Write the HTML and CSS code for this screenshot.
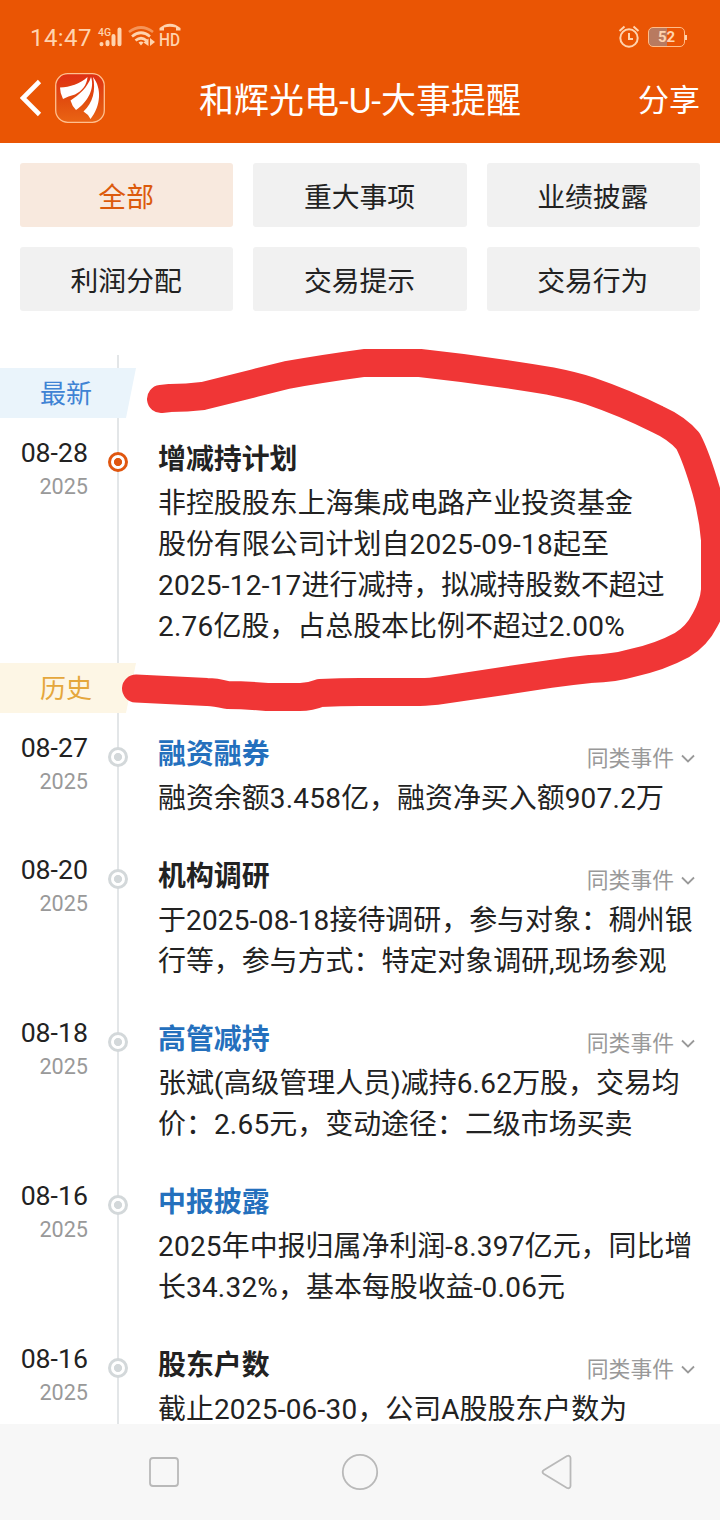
FILE: index.html
```html
<!DOCTYPE html>
<html lang="zh-CN">
<head>
    <meta charset="UTF-8">
    <meta name="viewport" content="width=device-width, initial-scale=1.0">
    <title>和辉光电-U-大事提醒</title>
    <link rel="stylesheet" href="styles.css">
</head>
<body>
    <div class="screen">
        <header class="header">
            <div class="status">
                <span class="clock">14:47</span>
                <svg class="signals" width="86" height="28" viewBox="0 0 86 28" fill="none">
                    <text x="1" y="11" class="net">4G</text>
                    <g stroke="#ffd3ae" stroke-width="4" stroke-linecap="round">
                        <path d="M4.500 19v.3M10.500 17v2.300M16.500 11v8.300M22.500 4.500v14.800"/>
                    </g>
                    <g stroke="#ffd3ae" stroke-width="2.700">
                        <path d="M32 7Q44-2 56 7" opacity=".5"/>
                        <path d="M35 11.500Q44 4 53 11.500"/>
                        <path d="M38.500 15.500Q44 11 49.500 15.500"/>
                    </g>
                    <path d="M41.500 17.500q2.500-2 5 0l-2.500 3zM51.500 13.500v7.500l-5-3.500zM53 13v8l5-4z" fill="#ffd3ae"/>
                    <path d="M62.500 5.500V3Q73-5.500 83.500 3v2.500h-4.500V2.500q-6-1.600-12 0v3z" fill="#ffd3ae"/>
                    <text x="62" y="21" class="hd" textLength="21" lengthAdjust="spacingAndGlyphs">HD</text>
                </svg>
                <svg class="alarm" width="22" height="24" viewBox="0 0 22 24" fill="none" stroke="#ffd3ae" stroke-width="2">
                    <circle cx="11" cy="13" r="8.700"/>
                    <path d="M11 8v6h4M1.500 6l5-4.500M20.500 6l-5-4.500"/>
                </svg>
                <div class="battery"><span>52</span></div>
            </div>
            <div class="titlebar">
                <svg class="back" width="24" height="38" viewBox="0 0 24 38" fill="none" stroke="#fff" stroke-width="4.600">
                    <path d="M19.500 2.500L3 19l16.500 16.500"/>
                </svg>
                <svg class="logo" width="50" height="50" viewBox="0 0 50 50">
                    <defs>
                        <linearGradient id="logobg" x1="0" y1="0" x2="0" y2="1">
                            <stop offset="0" stop-color="#df2f13"/>
                            <stop offset=".6" stop-color="#e2500f"/>
                            <stop offset="1" stop-color="#ea6414"/>
                        </linearGradient>
                    </defs>
                    <rect x=".7" y=".7" width="48.600" height="48.600" rx="12" fill="url(#logobg)" stroke="#ffc08f" stroke-width="1.300"/>
                    <g fill="#fff">
                        <path d="M5 14.500C15 14 25 11 32.500 4C32 12 27 18 20 21.500Q13 23 8 26Q5 20 5 14.500z"/>
                        <path d="M15.500 27.500C24 22 33 14 36 4C40 15 33 29 21 37Q17 33 15.500 27.500z"/>
                        <path d="M38 4C47 15 46 33 35.500 46Q33 41 28.500 38.500C38 30 41 17 38 4z"/>
                    </g>
                </svg>
                <h1>和辉光电-U-大事提醒</h1>
                <span class="share">分享</span>
            </div>
        </header>

        <nav class="tabs">
            <span class="tab active">全部</span>
            <span class="tab">重大事项</span>
            <span class="tab">业绩披露</span>
            <span class="tab">利润分配</span>
            <span class="tab">交易提示</span>
            <span class="tab">交易行为</span>
        </nav>

        <main class="timeline">
            <div class="tag latest">最新</div>
            <section class="event current">
                <div class="date">08-28<small>2025</small></div>
                <i class="dot"></i>
                <div class="content">
                    <div class="row"><h2>增减持计划</h2></div>
                    <p>非控股股东上海集成电路产业投资基金<br>股份有限公司计划自<b>2025-09-18</b>起至<br><b>2025-12-17</b>进行减持，拟减持股数不超过<br><b>2.76</b>亿股，占总股本比例不超过<b>2.00%</b></p>
                </div>
            </section>

            <div class="tag history">历史</div>
            <section class="event">
                <div class="date">08-27<small>2025</small></div>
                <i class="dot"></i>
                <div class="content">
                    <div class="row"><h2 class="link">融资融券</h2><span class="more">同类事件<svg width="14" height="9" viewBox="0 0 14 9"><path d="M1 1.500l6 6 6-6"/></svg></span></div>
                    <p>融资余额<b>3.458</b>亿，融资净买入额<b>907.2</b>万</p>
                </div>
            </section>
            <section class="event">
                <div class="date">08-20<small>2025</small></div>
                <i class="dot"></i>
                <div class="content">
                    <div class="row"><h2>机构调研</h2><span class="more">同类事件<svg width="14" height="9" viewBox="0 0 14 9"><path d="M1 1.500l6 6 6-6"/></svg></span></div>
                    <p>于<b>2025-08-18</b>接待调研，参与对象：稠州银<br>行等，参与方式：特定对象调研,现场参观</p>
                </div>
            </section>
            <section class="event">
                <div class="date">08-18<small>2025</small></div>
                <i class="dot"></i>
                <div class="content">
                    <div class="row"><h2 class="link">高管减持</h2><span class="more">同类事件<svg width="14" height="9" viewBox="0 0 14 9"><path d="M1 1.500l6 6 6-6"/></svg></span></div>
                    <p>张斌(高级管理人员)减持<b>6.62</b>万股，交易均<br>价：<b>2.65</b>元，变动途径：二级市场买卖</p>
                </div>
            </section>
            <section class="event">
                <div class="date">08-16<small>2025</small></div>
                <i class="dot"></i>
                <div class="content">
                    <div class="row"><h2 class="link">中报披露</h2></div>
                    <p><b>2025</b>年中报归属净利润<b>-8.397</b>亿元，同比增<br>长<b>34.32%</b>，基本每股收益<b>-0.06</b>元</p>
                </div>
            </section>
            <section class="event">
                <div class="date">08-16<small>2025</small></div>
                <i class="dot"></i>
                <div class="content">
                    <div class="row"><h2>股东户数</h2><span class="more">同类事件<svg width="14" height="9" viewBox="0 0 14 9"><path d="M1 1.500l6 6 6-6"/></svg></span></div>
                    <p>截止<b>2025-06-30</b>，公司A股股东户数为</p>
                </div>
            </section>
        </main>

        <footer class="navbar">
            <svg width="40" height="40" viewBox="0 0 40 40"><rect x="6" y="6" width="28" height="28" rx="3"/></svg>
            <svg width="40" height="40" viewBox="0 0 40 40"><circle cx="20" cy="20" r="17.200"/></svg>
            <svg width="40" height="40" viewBox="0 0 40 40"><path d="M31 4L8 18q-3 2 0 4L31 36q3 1 3.500-2V6q-.5-3-3.500-2z"/></svg>
        </footer>

        <!-- hand-drawn marker around the latest event -->
        <svg class="marker" width="720" height="1520" viewBox="0 0 720 1520">
            <path d="M161 399L170 398Q187 398 203 396L255 383L287 375Q320 369 364 363H420Q485 370 550 381Q575 386 590 391Q625 403 657 419Q677 428 688 441Q696 456 706 490Q713 515 715 540V590Q714 604 705 620Q697 636 682 645Q660 657 632 663Q615 668 590 669Q570 671 550 674L443 690Q430 692 420 692H360Q340 692 320 693Q310 697 300 697H267Q245 695 227 695Q215 692 207 692L136 688.500"/>
        </svg>
    </div>
</body>
</html>
```

FILE: styles.css
```css
* {
    box-sizing: border-box;
}
body {
    margin: 0;
    font-family: Roboto, "Noto Sans CJK SC", sans-serif;
    color: #222;
    background-color: #fff;
}
.screen {
    position: relative;
    display: flex;
    flex-direction: column;
    width: 720px;
    height: 1520px;
    overflow: hidden;
}
.header {
    height: 143px;
    flex-shrink: 0;
    background-color: #ea5504;
    color: #fff;
}
.status {
    display: flex;
    align-items: center;
    height: 55px;
    padding: 19px 33px 0 30px;
    color: #ffd3ae;
}
.clock {
    width: 66px;
    padding-top: 2px;
    font-size: 24px;
    letter-spacing: 0.4px;
}
.signals {
    margin: 3px 0 0 1px;
    overflow: visible;
}
.net {
    font-size: 10.5px;
    font-weight: 500;
    fill: #ffd3ae;
}
.hd {
    font-size: 18px;
    font-weight: 500;
    fill: #ffd3ae;
}
.alarm {
    margin-left: auto;
}
.battery {
    display: flex;
    align-items: center;
    margin-left: 8px;
}
.battery span {
    width: 37px;
    height: 20px;
    border: 1.5px solid #ffbd8a;
    border-radius: 5px;
    background: linear-gradient(90deg, #b87a60 52%, transparent 52%);
    font-size: 15px;
    font-weight: 700;
    line-height: 18px;
    text-align: center;
}
.battery::after {
    content: "";
    width: 2px;
    height: 5px;
    background-color: #ffd3ae;
}
.titlebar {
    display: grid;
    grid-template-columns: 35px 100px 1fr 135px;
    align-items: center;
    height: 88px;
    padding: 0 20px;
}
.logo {
    margin-top: -2px;
}
.back {
    margin-top: -3px;
}
h1 {
    margin: 5px 0 0;
    font-size: 35px;
    font-weight: 400;
    line-height: 50px;
    text-align: center;
    white-space: nowrap;
}
.share {
    padding-top: 3px;
    font-size: 31px;
    line-height: 50px;
    text-align: right;
}
.tabs {
    display: grid;
    grid-template-columns: repeat(3, 1fr);
    gap: 20px;
    padding: 20px 20px 0;
    flex-shrink: 0;
}
.tab {
    height: 64px;
    padding-right: 1px;
    border-radius: 3px;
    background-color: #f1f1f1;
    font-size: 27.8px;
    line-height: 69px;
    text-align: center;
}
.tab.active {
    background-color: #f8e9de;
    color: #dc5a0c;
}
.timeline {
    flex: 1;
    min-height: 0;
    margin-top: 44px;
    padding-top: 13px;
    background: linear-gradient(#e3e6e8, #e3e6e8) 117px 0 / 2px 100% no-repeat;
}
.tag {
    width: 136px;
    height: 50px;
    padding-left: 40px;
    font-size: 26px;
    line-height: 52px;
    clip-path: polygon(0 0, 100% 0, 126px 100%, 0 100%);
}
.latest {
    background-color: #eaf4fb;
    color: #3f83d4;
}
.history {
    background-color: #fdf6e5;
    color: #e5a73c;
}
.event {
    display: grid;
    grid-template-columns: 88px 20px 1fr;
    column-gap: 20px;
    padding: 20px 20px 18px 0;
}
.event:last-child {
    padding-bottom: 0;
}
.date {
    font-size: 26.7px;
    line-height: 31px;
    text-align: right;
}
.date small {
    display: block;
    font-size: 21.6px;
    line-height: 36px;
    color: #999;
}
.dot {
    width: 20px;
    height: 20px;
    margin: 14px 0 0;
    border: 3px solid #d3d8da;
    border-radius: 50%;
    background: radial-gradient(circle, #d3d8da 3.7px, #fff 4.4px);
}
.current .dot {
    border-color: #e0560f;
    background: radial-gradient(circle, #e0560f 3.7px, #fff 4.4px);
}
.content {
    padding-left: 10px;
}
.row {
    display: flex;
    justify-content: space-between;
    height: 40px;
    margin-bottom: 5px;
}
h2 {
    margin: 0;
    font-size: 27.9px;
    font-weight: 700;
    line-height: 44px;
}
.link {
    color: #2470bd;
}
.more {
    display: flex;
    align-items: center;
    gap: 7px;
    padding: 11px 5px 0 0;
    font-size: 21.8px;
    line-height: 30px;
    color: #999;
}
.more svg {
    margin-top: -1px;
    fill: none;
    stroke: #999;
    stroke-width: 1.8;
}
.content p {
    margin: 0 0 -2px;
    font-size: 27.95px;
    line-height: 41px;
    white-space: nowrap;
}
/* figures run slightly wider than the text */
.content b {
    font-weight: 400;
    letter-spacing: 0.25px;
}
.navbar {
    position: relative;
    display: flex;
    justify-content: space-between;
    align-items: center;
    height: 96px;
    flex-shrink: 0;
    padding: 0 144px;
    background-color: #f7f7f7;
}
.navbar svg {
    fill: none;
    stroke: #b9b9b9;
    stroke-width: 1.8;
}
.marker {
    position: absolute;
    top: 0;
    left: 0;
    fill: none;
    stroke: #f03636;
    stroke-width: 28;
    stroke-linecap: round;
    stroke-linejoin: round;
}
```
